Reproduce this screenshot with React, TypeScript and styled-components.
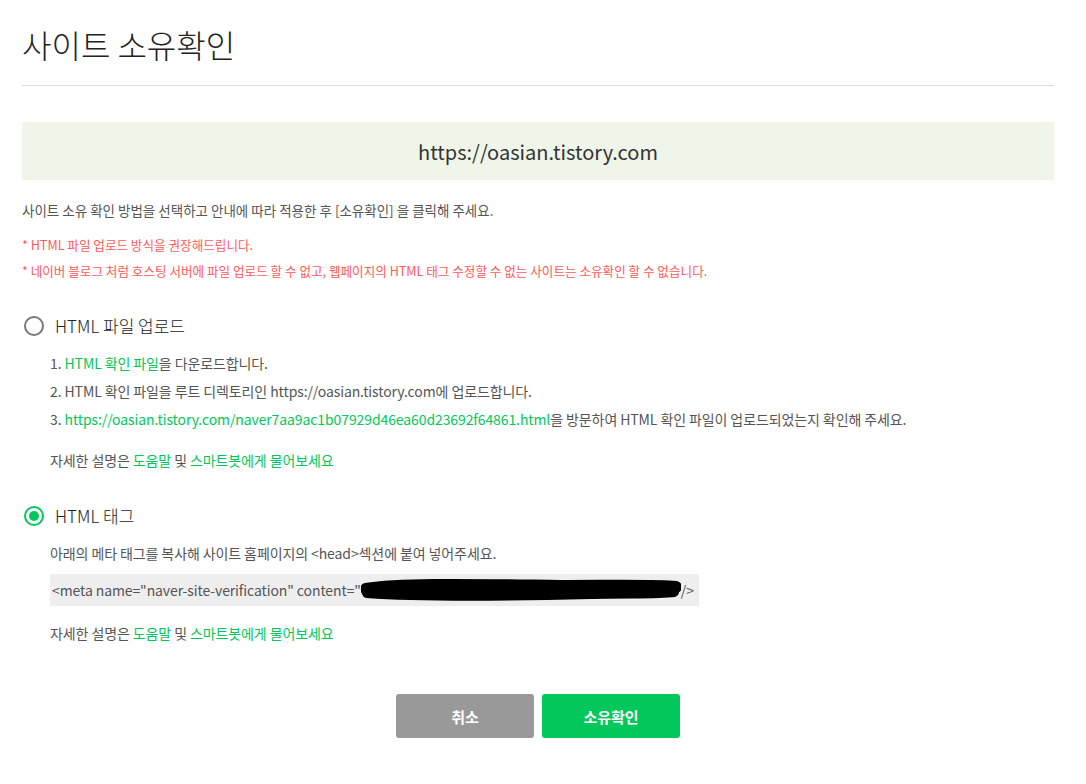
import React from "react";
import styled, { createGlobalStyle } from "styled-components";

const GlobalStyle = createGlobalStyle`
  body {
    margin: 0;
    background: #fff;
    font-family: "Noto Sans CJK KR", "Noto Sans", sans-serif;
    color: #333;
  }
`;

function App() {
    return (
        <Page>
            <GlobalStyle />
            <Title>사이트 소유확인</Title>
            <SiteBox>https://oasian.tistory.com</SiteBox>
            <Intro>사이트 소유 확인 방법을 선택하고 안내에 따라 적용한 후 [소유확인] 을 클릭해 주세요.</Intro>
            <Notes>
                <Note>* HTML 파일 업로드 방식을 권장해드립니다.</Note>
                <Note>* 네이버 블로그 처럼 호스팅 서버에 파일 업로드 할 수 없고, 웹페이지의 HTML 태그 수정할 수 없는 사이트는 소유확인 할 수 없습니다.</Note>
            </Notes>

            <Option>
                <RadioRow>
                    <Radio />
                    <OptionLabel>HTML 파일 업로드</OptionLabel>
                </RadioRow>
                <OptionBody>
                    <Steps>
                        <li>1. <Link>HTML 확인 파일</Link>을 다운로드합니다.</li>
                        <li>2. HTML 확인 파일을 루트 디렉토리인 https://oasian.tistory.com에 업로드합니다.</li>
                        <li>
                            3. <Link>https://oasian.tistory.com/naver7aa9ac1b07929d46ea60d23692f64861.html</Link>을 방문하여 HTML 확인 파일이 업로드되었는지 확인해 주세요.
                        </li>
                    </Steps>
                    <Help>
                        자세한 설명은 <Link>도움말</Link> 및 <Link>스마트봇에게 물어보세요</Link>
                    </Help>
                </OptionBody>
            </Option>

            <Option $tight>
                <RadioRow>
                    <Radio $checked />
                    <OptionLabel>HTML 태그</OptionLabel>
                </RadioRow>
                <OptionBody>
                    <Text>아래의 메타 태그를 복사해 사이트 홈페이지의 &lt;head&gt;섹션에 붙여 넣어주세요.</Text>
                    <Code>
                        &lt;meta name="naver-site-verification" content="
                        <Redacted viewBox="0 0 320 26" preserveAspectRatio="none">
                            <path d="M5 12 C40 6 120 8 200 9 C250 9 298 8 315 10" stroke="#000" strokeWidth="12" strokeLinecap="round" fill="none" />
                            <path d="M6 16 C60 20 150 19 230 17 C270 16 298 17 313 15" stroke="#000" strokeWidth="10" strokeLinecap="round" fill="none" />
                        </Redacted>
                        {" "}/&gt;
                    </Code>
                    <Help>
                        자세한 설명은 <Link>도움말</Link> 및 <Link>스마트봇에게 물어보세요</Link>
                    </Help>
                </OptionBody>
            </Option>

            <Buttons>
                <Button>취소</Button>
                <Button $primary>소유확인</Button>
            </Buttons>
        </Page>
    );
}

export default App;

const Page = styled.div`
    width: 1032px;
    padding: 0 22px 40px;
`;

const Title = styled.h1`
    margin: 0;
    padding: 24px 0 21px;
    font-size: 32px;
    font-weight: 300;
    line-height: 40px;
    color: #222;
    border-bottom: 1px solid #ddd;
`;

const SiteBox = styled.div`
    margin-top: 36px;
    height: 58px;
    display: flex;
    align-items: center;
    justify-content: center;
    background: #f0f5e9;
    font-size: 20px;
    color: #333;
`;

const Intro = styled.p`
    margin: 21px 0 0;
    font-size: 13.5px;
    line-height: 18px;
    color: #555;
`;

const Notes = styled.div`
    margin-top: 17px;
    display: flex;
    flex-direction: column;
    gap: 8px;
`;

const Note = styled.div`
    font-size: 12.6px;
    line-height: 18px;
    color: #ff5a5a;
`;

const Option = styled.section<{ $tight?: boolean }>`
    margin-top: ${(p) => (p.$tight ? "32px" : "36px")};
`;

const RadioRow = styled.div`
    display: flex;
    align-items: center;
    gap: 11px;
`;

const Radio = styled.span<{ $checked?: boolean }>`
    width: 16px;
    height: 16px;
    margin-left: 2px;
    border-radius: 50%;
    border: 2px solid ${(p) => (p.$checked ? "#03c75a" : "#777")};
    display: flex;
    align-items: center;
    justify-content: center;
    &::after {
        content: "";
        width: 10px;
        height: 10px;
        border-radius: 50%;
        background: #03c75a;
        display: ${(p) => (p.$checked ? "block" : "none")};
    }
`;

const OptionLabel = styled.span`
    font-size: 17px;
    font-weight: 300;
    line-height: 20px;
    color: #222;
`;

const OptionBody = styled.div`
    padding-left: 28px;
    margin-top: 13px;
    font-size: 14px;
    line-height: 28px;
    letter-spacing: -0.1px;
    color: #555;
`;

const Steps = styled.ul`
    margin: 0;
    padding: 0;
    list-style: none;
`;

const Link = styled.span`
    color: #03c75a;
`;

const Help = styled.div`
    margin-top: 13px;
`;

const Text = styled.div`
    margin-top: 0;
`;

const Code = styled.div`
    margin-top: 7px;
    display: inline-flex;
    align-items: center;
    height: 32px;
    padding: 0 5px 0 2px;
    background: #eee;
    white-space: pre;
`;

const Redacted = styled.svg`
    width: 320px;
    height: 26px;
`;

const Buttons = styled.div`
    margin-top: 47px;
    display: flex;
    justify-content: center;
    gap: 8px;
`;

const Button = styled.button<{ $primary?: boolean }>`
    width: 138px;
    height: 44px;
    border: none;
    border-radius: 3px;
    background: ${(p) => (p.$primary ? "#03c75a" : "#999")};
    color: #fff;
    font-family: inherit;
    font-size: 15px;
    font-weight: 700;
    cursor: pointer;
`;
